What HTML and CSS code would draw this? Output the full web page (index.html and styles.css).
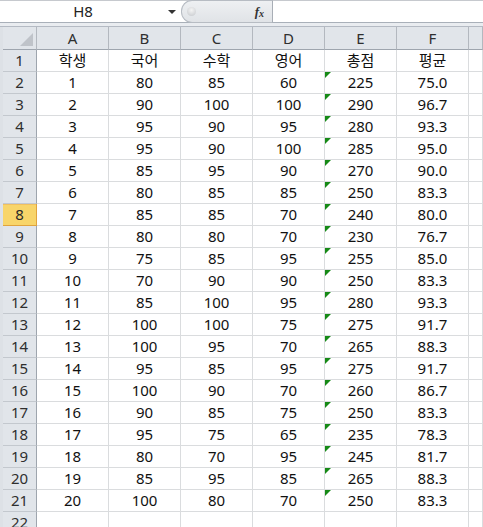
FILE: index.html
```html
<!DOCTYPE html>
<html lang="ko">
<head>
<meta charset="utf-8">
<link rel="stylesheet" href="styles.css">
</head>
<body>
<div class="app">
  <div class="fbar">
    <div class="namebox"><span class="nb-text">H8</span><span class="nb-arrow"></span></div>
    <div class="fx-zone"><span class="fx-ball"></span><span class="fx">f<sub>x</sub></span></div>
    <div class="finput"></div>
  </div>
  <div class="fgap"></div>
  <div class="sheet">
    <div class="row hdr">
      <div class="c corner"><svg width="33" height="22" viewBox="0 0 33 22"><polygon points="30,6 30,19 17,19" fill="#bfc3c9"/></svg></div>
      <div class="c ch">A</div><div class="c ch">B</div><div class="c ch">C</div><div class="c ch">D</div><div class="c ch">E</div><div class="c ch">F</div><div class="c ch last"></div>
    </div>
    <div class="row"><div class="c rh">1</div><div class="c">학생</div><div class="c">국어</div><div class="c">수학</div><div class="c">영어</div><div class="c">총점</div><div class="c">평균</div><div class="c"></div></div>
    <div class="row"><div class="c rh">2</div><div class="c">1</div><div class="c">80</div><div class="c">85</div><div class="c">60</div><div class="c tri">225</div><div class="c">75.0</div><div class="c"></div></div>
    <div class="row"><div class="c rh">3</div><div class="c">2</div><div class="c">90</div><div class="c">100</div><div class="c">100</div><div class="c tri">290</div><div class="c">96.7</div><div class="c"></div></div>
    <div class="row"><div class="c rh">4</div><div class="c">3</div><div class="c">95</div><div class="c">90</div><div class="c">95</div><div class="c tri">280</div><div class="c">93.3</div><div class="c"></div></div>
    <div class="row"><div class="c rh">5</div><div class="c">4</div><div class="c">95</div><div class="c">90</div><div class="c">100</div><div class="c tri">285</div><div class="c">95.0</div><div class="c"></div></div>
    <div class="row"><div class="c rh">6</div><div class="c">5</div><div class="c">85</div><div class="c">95</div><div class="c">90</div><div class="c tri">270</div><div class="c">90.0</div><div class="c"></div></div>
    <div class="row"><div class="c rh">7</div><div class="c">6</div><div class="c">80</div><div class="c">85</div><div class="c">85</div><div class="c tri">250</div><div class="c">83.3</div><div class="c"></div></div>
    <div class="row"><div class="c rh sel">8</div><div class="c">7</div><div class="c">85</div><div class="c">85</div><div class="c">70</div><div class="c tri">240</div><div class="c">80.0</div><div class="c"></div></div>
    <div class="row"><div class="c rh">9</div><div class="c">8</div><div class="c">80</div><div class="c">80</div><div class="c">70</div><div class="c tri">230</div><div class="c">76.7</div><div class="c"></div></div>
    <div class="row"><div class="c rh">10</div><div class="c">9</div><div class="c">75</div><div class="c">85</div><div class="c">95</div><div class="c tri">255</div><div class="c">85.0</div><div class="c"></div></div>
    <div class="row"><div class="c rh">11</div><div class="c">10</div><div class="c">70</div><div class="c">90</div><div class="c">90</div><div class="c tri">250</div><div class="c">83.3</div><div class="c"></div></div>
    <div class="row"><div class="c rh">12</div><div class="c">11</div><div class="c">85</div><div class="c">100</div><div class="c">95</div><div class="c tri">280</div><div class="c">93.3</div><div class="c"></div></div>
    <div class="row"><div class="c rh">13</div><div class="c">12</div><div class="c">100</div><div class="c">100</div><div class="c">75</div><div class="c tri">275</div><div class="c">91.7</div><div class="c"></div></div>
    <div class="row"><div class="c rh">14</div><div class="c">13</div><div class="c">100</div><div class="c">95</div><div class="c">70</div><div class="c tri">265</div><div class="c">88.3</div><div class="c"></div></div>
    <div class="row"><div class="c rh">15</div><div class="c">14</div><div class="c">95</div><div class="c">85</div><div class="c">95</div><div class="c tri">275</div><div class="c">91.7</div><div class="c"></div></div>
    <div class="row"><div class="c rh">16</div><div class="c">15</div><div class="c">100</div><div class="c">90</div><div class="c">70</div><div class="c tri">260</div><div class="c">86.7</div><div class="c"></div></div>
    <div class="row"><div class="c rh">17</div><div class="c">16</div><div class="c">90</div><div class="c">85</div><div class="c">75</div><div class="c tri">250</div><div class="c">83.3</div><div class="c"></div></div>
    <div class="row"><div class="c rh">18</div><div class="c">17</div><div class="c">95</div><div class="c">75</div><div class="c">65</div><div class="c tri">235</div><div class="c">78.3</div><div class="c"></div></div>
    <div class="row"><div class="c rh">19</div><div class="c">18</div><div class="c">80</div><div class="c">70</div><div class="c">95</div><div class="c tri">245</div><div class="c">81.7</div><div class="c"></div></div>
    <div class="row"><div class="c rh">20</div><div class="c">19</div><div class="c">85</div><div class="c">95</div><div class="c">85</div><div class="c tri">265</div><div class="c">88.3</div><div class="c"></div></div>
    <div class="row"><div class="c rh">21</div><div class="c">20</div><div class="c">100</div><div class="c">80</div><div class="c">70</div><div class="c tri">250</div><div class="c">83.3</div><div class="c"></div></div>
    <div class="row"><div class="c rh">22</div><div class="c"></div><div class="c"></div><div class="c"></div><div class="c"></div><div class="c"></div><div class="c"></div><div class="c"></div></div>
  </div>
</div>
</body>
</html>
```
FILE: styles.css
```css
* { box-sizing: border-box; }
html, body { margin: 0; padding: 0; background: #fff; }
body {
  font-family: "Noto Sans", "Noto Sans CJK KR", sans-serif;
  font-size: 15px;
  color: #111;
  width: 483px;
  height: 527px;
  overflow: hidden;
}
.app { display: flex; flex-direction: column; }

.fbar {
  display: flex;
  height: 23px;
  border-top: 1px solid #c6c9ce;
  border-bottom: 1px solid #a9b0b9;
  background: #fff;
}
.namebox {
  width: 181px;
  display: flex;
  align-items: center;
  padding-left: 3px;
}
.nb-text {
  width: 160px;
  text-align: center;
  font-size: 15px;
  line-height: 21px;
  color: #222;
}
.nb-arrow {
  margin-left: 5px;
  width: 0; height: 0;
  border-left: 4px solid transparent;
  border-right: 4px solid transparent;
  border-top: 4px solid #333;
}
.fx-zone {
  width: 92px;
  position: relative;
  background: linear-gradient(#eef0f2, #e0e3e7);
  border: 1px solid #b7bcc3;
  border-right: 1px solid #a8aeb6;
  border-radius: 11px 0 0 11px;
  margin-top: -1px;
  margin-bottom: -1px;
  display: flex;
  align-items: center;
  justify-content: flex-end;
  padding-right: 8px;
}
.fx-ball {
  position: absolute;
  left: 5px;
  top: 6px;
  width: 9px;
  height: 9px;
  border-radius: 50%;
  background: radial-gradient(circle at 50% 35%, #f4f4f4, #c4c7cb);
}
.fx {
  font-family: "Liberation Serif", serif;
  font-style: italic;
  font-weight: bold;
  font-size: 13px;
  color: #333;
  line-height: 1;
}
.fx sub { font-size: 10px; vertical-align: -1px; }
.finput { flex: 1; background: #fff; }

.fgap {
  height: 4px;
  background: #e9ecf0;
  border-bottom: 1px solid #b4bac3;
}

.sheet {
  display: flex;
  flex-direction: column;
  border-left: 3px solid #dde1e6;
}
.row {
  display: grid;
  grid-template-columns: 34px repeat(6, 72px) 1fr;
  height: 22px;
}
.row.hdr { height: 23px; }
.c {
  border-right: 1px solid #dadcde;
  border-bottom: 1px solid #dadcde;
  display: flex;
  align-items: center;
  justify-content: center;
  line-height: 1;
  position: relative;
  white-space: nowrap;
}
.hdr .c {
  background: #e1e5ea;
  border-right: 1px solid #b3b8bf;
  border-bottom: 1px solid #9ea5ae;
  color: #2f2f2f;
}
.hdr .corner { justify-content: flex-start; align-items: flex-start; }
.corner svg { display: block; }
.rh {
  background: #e1e5ea;
  border-right: 1px solid #9ea5ae;
  border-bottom: 1px solid #c3c8ce;
  color: #2f2f2f;
}
.rh.sel {
  background: #f8d56a;
  border-right: 1px solid #e0a43e;
  border-bottom: 1px solid #e0a43e;
  box-shadow: inset 0 1px 0 #f0c060;
  color: #2a2a2a;
}
.tri::before {
  content: "";
  position: absolute;
  left: 0;
  top: 0;
  width: 0;
  height: 0;
  border-top: 6px solid #168a16;
  border-right: 6px solid transparent;
}
```
